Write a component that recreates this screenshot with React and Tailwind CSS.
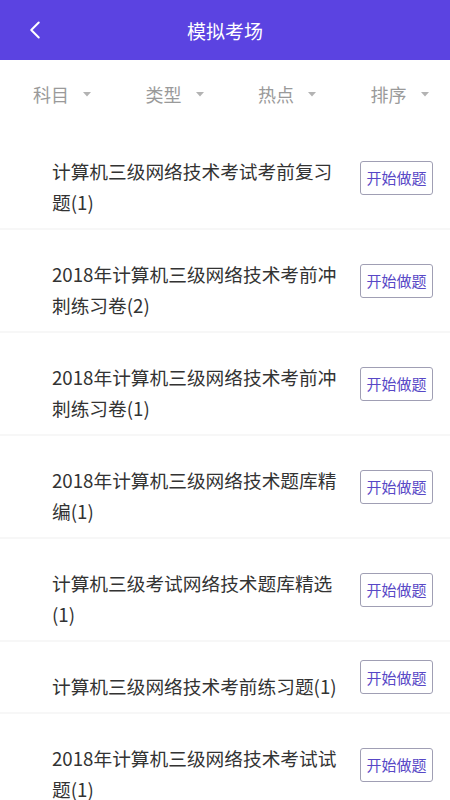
import { ChevronLeft } from "lucide-react";

const filters = ["科目", "类型", "热点", "排序"];

const papers = [
  "计算机三级网络技术考试考前复习题(1)",
  "2018年计算机三级网络技术考前冲刺练习卷(2)",
  "2018年计算机三级网络技术考前冲刺练习卷(1)",
  "2018年计算机三级网络技术题库精编(1)",
  "计算机三级考试网络技术题库精选(1)",
  "计算机三级网络技术考前练习题(1)",
  "2018年计算机三级网络技术考试试题(1)",
];

const font = { fontFamily: '"Noto Sans CJK SC", "Noto Sans", sans-serif' };

const Caret = () => (
  <svg width="8" height="5" viewBox="0 0 8 5" className="ml-[14px] mt-[2px]">
    <path d="M0 0 L8 0 L4 4.5 Z" fill="#b3b3b3" />
  </svg>
);

const App = () => {
  return (
    <div className="w-[450px] h-[800px] overflow-hidden bg-white" style={font}>
      {/* Header */}
      <div className="relative h-[60px] bg-[#5b43e1] flex items-center justify-center">
        <ChevronLeft
          className="absolute left-[20px] top-1/2 -translate-y-1/2 text-white"
          size={30}
          strokeWidth={1.6}
        />
        <h1 className="text-white text-[19px] leading-none">模拟考场</h1>
      </div>

      {/* Filters */}
      <div className="grid grid-cols-4 h-[67px] items-center">
        {filters.map((f) => (
          <div key={f} className="flex items-center pl-[33px]">
            <span className="text-[18px] text-[#9a9a9a] leading-none">{f}</span>
            <Caret />
          </div>
        ))}
      </div>

      {/* List */}
      <div className="flex flex-col">
        {papers.map((p, i) => (
          <div key={i} className="border-b-[2px] border-[#f7f7f7]">
            <div className="flex items-center">
              <div className="w-[345px] shrink-0 pl-[52px] pt-[28px] pb-[11px] text-[18.7px] leading-[31px] text-[#333333]">
                {p}
              </div>
              <button className="ml-auto mr-[17px] w-[73px] h-[34px] border border-[#a09fb4] rounded-[3px] text-[15px] text-[#5848c6] leading-none bg-white">
                开始做题
              </button>
            </div>
          </div>
        ))}
      </div>
    </div>
  );
};

export default App;
